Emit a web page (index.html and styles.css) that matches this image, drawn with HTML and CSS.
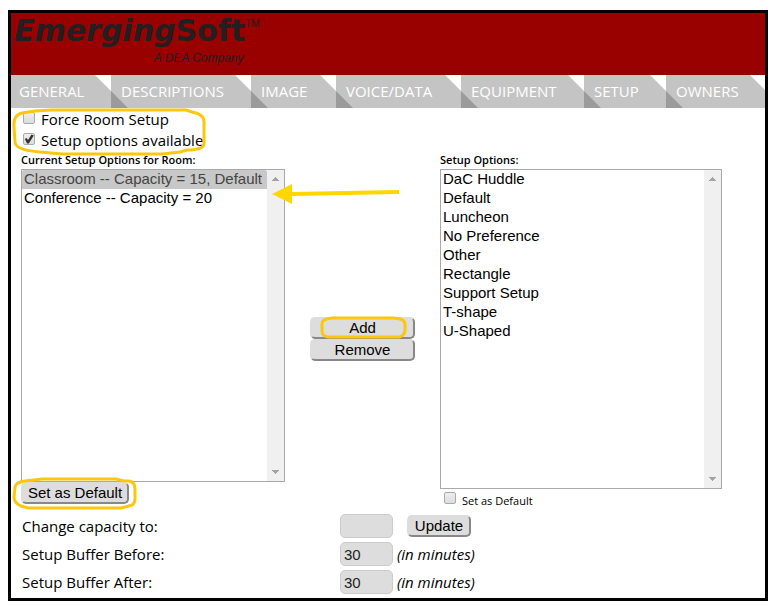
FILE: index.html
```html
<!DOCTYPE html>
<html lang="en">
<head>
<meta charset="utf-8">
<title>EmergingSoft - Room Setup</title>
<link rel="stylesheet" href="styles.css">
</head>
<body>
<div class="frame">
  <header class="banner">
    <div class="logo">
      <div class="logo-name"><i>Emerging</i>Soft<span class="tm">TM</span></div>
      <div class="logo-sub">A DEA Company</div>
    </div>
  </header>
  <nav class="tabs">
    <a class="tab tab-general" href="#">GENERAL</a>
    <a class="tab tab-descriptions" href="#">DESCRIPTIONS</a>
    <a class="tab tab-image" href="#">IMAGE</a>
    <a class="tab tab-voice" href="#">VOICE/DATA</a>
    <a class="tab tab-equipment" href="#">EQUIPMENT</a>
    <a class="tab tab-setup" href="#">SETUP</a>
    <a class="tab tab-owners" href="#">OWNERS</a>
  </nav>
  <main class="content">
    <div class="checks">
      <label class="check-row"><input type="checkbox">Force Room Setup</label>
      <label class="check-row"><input type="checkbox" checked>Setup options available</label>
      <svg class="mark mark-checks" width="196" height="50" viewBox="0 0 196 50" aria-hidden="true"><path d="M10 6 L23 4 L40 3 H174 L180 5 Q192 7 192 15 V37 Q191 43 175 43 L168 45 L150 47 H50 L28 45 Q3 43 3 35 L2 20 Q1 8 10 6Z"/></svg>
    </div>
    <div class="lists">
      <section class="list-col">
        <label class="list-title" for="current">Current Setup Options for Room:</label>
        <div class="listbox listbox-current">
          <select id="current" size="16">
            <option class="picked">Classroom -- Capacity = 15, Default</option>
            <option>Conference -- Capacity = 20</option>
          </select>
          <div class="scroll">
            <svg width="7" height="4" viewBox="0 0 7 4"><path d="M3 0h1v1h1v1h1v1h1v1H0V3h1V2h1V1h1z"/></svg>
            <svg width="7" height="4" viewBox="0 0 7 4"><path d="M0 0h7v1H6v1H5v1H4v1H3V3H2V2H1V1H0z"/></svg>
          </div>
        </div>
        <div class="default-action">
          <button class="btn btn-default" type="button">Set as Default</button>
          <svg class="mark mark-default" width="126" height="33" viewBox="0 0 126 33" aria-hidden="true"><path d="M13 4 L30 2 H104 L112 4 H117 Q123 5 123 12 V22 Q123 28 117 29 L109 31 H16 L9 29 Q2 26 2 20 L3 10 Q4 5 13 4Z"/></svg>
        </div>
        <svg class="arrow" width="130" height="24" viewBox="0 0 130 24" aria-hidden="true"><path d="M0 13 L20 3 V11 L127 9 V13 L20 15 V23Z"/></svg>
      </section>
      <div class="moves">
        <button class="btn" type="button">Add</button>
        <button class="btn" type="button">Remove</button>
        <svg class="mark mark-add" width="88" height="24" viewBox="0 0 88 24" aria-hidden="true"><path d="M7 3 L12 2 H74 L80 3 Q85 4 85 9 V15 Q84 20 79 21 H8 Q2 20 2 15 V8 Q2 4 7 3Z"/></svg>
      </div>
      <section class="list-col">
        <label class="list-title" for="available">Setup Options:</label>
        <div class="listbox listbox-available">
          <select id="available" size="16">
            <option>DaC Huddle</option>
            <option>Default</option>
            <option>Luncheon</option>
            <option>No Preference</option>
            <option>Other</option>
            <option>Rectangle</option>
            <option>Support Setup</option>
            <option>T-shape</option>
            <option>U-Shaped</option>
          </select>
          <div class="scroll">
            <svg width="7" height="4" viewBox="0 0 7 4"><path d="M3 0h1v1h1v1h1v1h1v1H0V3h1V2h1V1h1z"/></svg>
            <svg width="7" height="4" viewBox="0 0 7 4"><path d="M0 0h7v1H6v1H5v1H4v1H3V3H2V2H1V1H0z"/></svg>
          </div>
        </div>
        <label class="small-check"><input type="checkbox"><span>Set as Default</span></label>
      </section>
    </div>
    <div class="fields">
      <div class="field">
        <label for="capacity">Change capacity to:</label>
        <input class="num" id="capacity" type="text">
        <button class="btn btn-update" type="button">Update</button>
      </div>
      <div class="field">
        <label for="before">Setup Buffer Before:</label>
        <input class="num" id="before" type="text" value="30">
        <em>(in minutes)</em>
      </div>
      <div class="field">
        <label for="after">Setup Buffer After:</label>
        <input class="num" id="after" type="text" value="30">
        <em>(in minutes)</em>
      </div>
    </div>
  </main>
</div>
</body>
</html>
```
FILE: styles.css
```css
* { box-sizing: border-box; }

body {
  margin: 10px 8px 5px;
  background: #fff;
  color: #000;
  font: 15px/21px "Open Sans", "Noto Sans", sans-serif;
}

.frame { border: 3px solid #000; }

/* Banner */
.banner {
  background: #900;
  color: #231f20;
  padding: 1px 3px 8px;
}
.logo { width: max-content; }
.logo-name {
  font: bold 30px/34px "DejaVu Sans", sans-serif;
  height: 34px;
}
.tm {
  font: 10px/12px "Liberation Sans", sans-serif;
  vertical-align: 14px;
}
.logo-sub {
  font: italic 12px/20px "Liberation Sans", sans-serif;
  text-align: right;
  padding-right: 16px;
  height: 19px;
}

/* Tabs */
.tabs {
  display: flex;
  height: 33px;
  overflow: hidden;
}
.tab {
  flex: none;
  padding-left: 10px;
  background: #c4c4c4;
  color: #fff;
  line-height: 33px;
  text-decoration: none;
  white-space: nowrap;
  position: relative;
  clip-path: polygon(0 0, calc(100% - 16px) 0, 100% 16px, 100% 100%, 0 100%);
}
.tab + .tab::before {
  content: "";
  position: absolute;
  left: 0;
  bottom: 0;
  width: 17px;
  height: 17px;
  background: #9b9b9b;
  clip-path: polygon(0 0, 100% 100%, 0 100%);
}
.tab-general { width: 100px; padding-left: 8px; }
.tab-descriptions { width: 140px; }
.tab-image { width: 85px; }
.tab-voice { width: 125px; }
.tab-equipment { width: 123px; }
.tab-setup { width: 82px; }
.tab-owners { width: 100px; }

/* Content */
.content { padding: 1px 43px 2px 10px; }

.checks { position: relative; }
.check-row {
  display: flex;
  gap: 6px;
  padding-left: 2px;
  width: max-content;
}
input[type="checkbox"] {
  appearance: none;
  width: 12px;
  height: 12px;
  margin: 3px 0 0;
  border: 1px solid #aaa;
  border-radius: 2px;
  background: linear-gradient(#eee, #dcdcdc);
}
input[type="checkbox"]:checked::before {
  content: "";
  display: block;
  width: 10px;
  height: 10px;
  background: #333;
  clip-path: polygon(8% 50%, 25% 40%, 40% 60%, 75% 5%, 98% 15%, 48% 95%, 32% 95%);
}

.lists {
  display: grid;
  grid-template-columns: 264fr 105px 282fr;
  column-gap: 25px;
}
.list-col { position: relative; min-width: 0; }
.list-title {
  display: block;
  height: 18px;
  font-size: 11px;
  font-weight: 600;
  line-height: 17px;
  white-space: nowrap;
}
.listbox {
  display: flex;
  border: 1px solid #a9a9a9;
}
.listbox-current { height: 313px; }
.listbox-available { height: 320px; }
.listbox select {
  flex: 1;
  min-width: 0;
  margin: 0;
  padding: 0;
  border: 0;
  outline: 0;
  overflow: hidden;
  background: #fff;
  color: #000;
  font: 15px/18px "Liberation Sans", sans-serif;
}
.listbox option { height: 19px; min-height: 19px; padding: 0 2px; line-height: 18px; }
.listbox .picked { background: #c8c8c8; color: #444; }
.scroll {
  display: flex;
  flex-direction: column;
  justify-content: space-between;
  align-items: center;
  width: 17px;
  padding: 7px 0;
  background: #f0f0f0;
  fill: #a3a3a3;
}

.btn {
  display: block;
  height: 22px;
  padding: 0;
  border: 2px solid #ddd;
  border-right-color: #888;
  border-bottom-color: #888;
  border-radius: 5px;
  background: #ddd;
  color: #000;
  font: 15px/18px "Liberation Sans", sans-serif;
}
.moves {
  position: relative;
  align-self: start;
  display: grid;
  padding-top: 166px;
}
.default-action { position: relative; }
.btn-default { width: 108px; }
.btn-update { width: 64px; margin-left: 10px; }

.small-check {
  display: flex;
  gap: 6px;
  padding-left: 4px;
  font-size: 11px;
  line-height: 24px;
  height: 23px;
}

/* Numeric fields */
.field {
  display: flex;
  align-items: center;
  gap: 4px;
  height: 28px;
}
.field label { flex: none; width: 315px; padding-left: 1px; }
.num {
  width: 53px;
  height: 24px;
  padding: 0 3px;
  border: 1px solid #ccc;
  border-radius: 5px;
  background: #ddd;
  color: #222;
  font: 15px/20px "Liberation Sans", sans-serif;
}

/* Highlight strokes drawn over the form */
.mark {
  position: absolute;
  fill: none;
  stroke: #fdc70e;
  stroke-width: 3;
  pointer-events: none;
}
.mark-checks { left: -9px; top: -2px; }
.mark-default { left: -9px; top: -5px; }
.mark-add { left: 10px; top: 165px; }
.arrow {
  position: absolute;
  left: 251px;
  top: 30px;
  z-index: 1;
  fill: #ffd700;
}
```
